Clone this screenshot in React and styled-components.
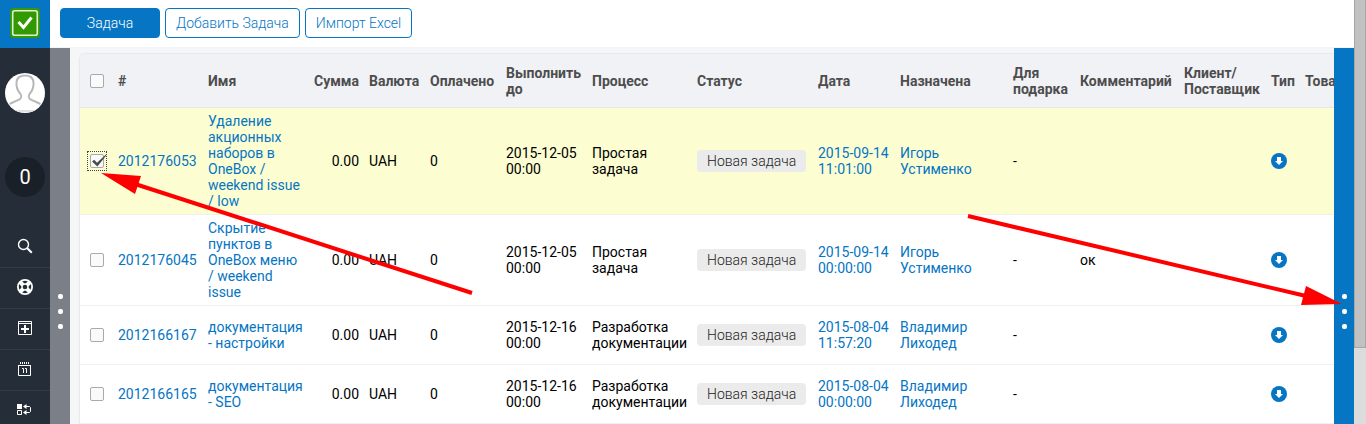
import React from 'react';
import styled, { createGlobalStyle } from 'styled-components';

const Global = createGlobalStyle`
  * { box-sizing: border-box; }
  body {
    margin: 0;
    font: 14px/16px Roboto, "Liberation Sans", sans-serif;
    color: #000;
    background: #f5f6f8;
  }
  a { color: #0575c4; text-decoration: none; }
  svg { display: block; }
`;

const Shell = styled.div`
  display: flex;
  height: 100vh;
  overflow: hidden;
`;

const Sidebar = styled.nav`
  flex: 0 0 50px;
  display: flex;
  flex-direction: column;
  background: #252e38;
`;

const Logo = styled.a`
  flex: none;
  display: flex;
  align-items: center;
  justify-content: center;
  height: 48px;
  padding-bottom: 2px;
  background: #0575c4;
`;

const Avatar = styled.a`
  flex: none;
  width: 40px;
  height: 40px;
  margin: 25px 5px 44px;
  border-radius: 50%;
  overflow: hidden;
  background: #fff;
`;

const Counter = styled.a`
  flex: none;
  width: 40px;
  height: 40px;
  margin: 0 5px 30px;
  border-radius: 50%;
  background: #1a2027;
  color: #fff;
  font-size: 20px;
  line-height: 40px;
  text-align: center;
`;

const SideButton = styled.button`
  flex: none;
  display: flex;
  align-items: center;
  justify-content: center;
  width: 100%;
  height: 41px;
  padding: 0 0 2px;
  border: 0;
  border-bottom: 1px solid #323b46;
  background: none;
  color: #fff;
`;

const Main = styled.div`
  flex: 1;
  min-width: 0;
  display: flex;
  flex-direction: column;
`;

const Toolbar = styled.header`
  flex: none;
  display: flex;
  gap: 5px;
  height: 48px;
  padding: 8px 10px;
  background: #fff;
  border-bottom: 1px solid #f3f4f6;
`;

const ToolButton = styled.button`
  height: 30px;
  min-width: 100px;
  padding: 0 10px;
  border: 1px solid #0575c4;
  border-radius: 4px;
  background: ${(p) => (p.$primary ? '#0575c4' : '#fff')};
  color: ${(p) => (p.$primary ? '#fff' : '#0575c4')};
  font: 300 14px/28px Roboto, "Liberation Sans", sans-serif;
  white-space: nowrap;
`;

const Workspace = styled.div`
  flex: 1;
  min-height: 0;
  display: flex;
`;

const Handle = styled.button`
  flex: 0 0 20px;
  display: flex;
  flex-direction: column;
  align-items: center;
  gap: 10px;
  padding: 246px 0 0;
  border: 0;
  background: ${(p) => (p.$active ? '#0575c4' : '#7b7f87')};
`;

const Dot = styled.span`
  width: 5px;
  height: 5px;
  border-radius: 2px;
  background: #fff;
`;

const Content = styled.main`
  flex: 1;
  min-width: 0;
  padding: 6px 0 0 10px;
  overflow: hidden;
`;

const Table = styled.table`
  table-layout: fixed;
  width: 100%;
  min-width: 1300px;
  border-collapse: separate;
  border-spacing: 0;
  background: #fff;
  border-radius: 5px 0 0 0;
  box-shadow: 0 0 2px rgba(0, 0, 0, 0.2);
`;

const Col = styled.col`
  width: ${(p) => (p.$w ? `${p.$w}px` : 'auto')};
`;

const Th = styled.th`
  height: 54px;
  padding: 0 5px;
  border-bottom: 1px solid #e4e6ea;
  background: #f1f2f6;
  color: #4d4d4d;
  font-weight: 700;
  text-align: ${(p) => p.$align || 'left'};
  &:first-child { padding-left: 10px; border-top-left-radius: 5px; }
`;

const Row = styled.tr`
  height: 59px;
  background: ${(p) => (p.$selected ? '#fcfed1' : '#fff')};
`;

const Td = styled.td`
  padding: 5px;
  border-bottom: 1px solid #f0f0f0;
  text-align: ${(p) => p.$align || 'left'};
  &:first-child { padding-left: 10px; }
`;

const CheckLabel = styled.label`
  position: relative;
  display: block;
  width: 14px;
  height: 14px;
  outline: ${(p) => (p.$focused ? '1px dotted #444' : 'none')};
  outline-offset: 2px;
  svg { position: absolute; left: 1px; top: 0; pointer-events: none; }
`;

const Checkbox = styled.input`
  appearance: none;
  display: block;
  width: 14px;
  height: 14px;
  margin: 0;
  border: 1px solid #aaa;
  border-radius: 2px;
  background: #fafafa;
`;

const Status = styled.span`
  display: inline-block;
  padding: 3px 10px;
  border-radius: 4px;
  background: #ebebeb;
  color: #222;
  font-weight: 300;
  white-space: nowrap;
`;

const TypeLink = styled.a`
  display: block;
  width: 16px;
`;

const ScrollTrack = styled.div`
  flex: 0 0 12px;
  background: #dcdcdc;
`;

const ScrollThumb = styled.div`
  height: 82vh;
  border: 1px solid #a6a6a6;
  border-top: 0;
  background: #c1c1c1;
`;

const Arrows = styled.svg`
  position: absolute;
  left: 0;
  top: 0;
  pointer-events: none;
`;

const columns = [
  { title: '#', w: 90 },
  { title: 'Имя', w: 105 },
  { title: 'Сумма', w: 56, align: 'right' },
  { title: 'Валюта', w: 61 },
  { title: 'Оплачено', w: 76 },
  { title: 'Выполнить до', w: 86 },
  { title: 'Процесс', w: 105 },
  { title: 'Статус', w: 121 },
  { title: 'Дата', w: 82 },
  { title: 'Назначена', w: 113 },
  { title: 'Для подарка', w: 67 },
  { title: 'Комментарий', w: 104 },
  { title: 'Клиент/ Поставщик', w: 87 },
  { title: 'Тип', w: 34 },
  { title: 'Товары' },
];

const tasks = [
  { id: '2012176053', name: 'Удаление акционных наборов в OneBox / weekend issue / low', due: '2015-12-05 00:00', process: 'Простая задача', date: '2015-09-14 11:01:00', who: 'Игорь Устименко', note: '', selected: true },
  { id: '2012176045', name: 'Скрытие пунктов в OneBox меню / weekend issue', due: '2015-12-05 00:00', process: 'Простая задача', date: '2015-09-14 00:00:00', who: 'Игорь Устименко', note: 'ок' },
  { id: '2012166167', name: 'документация - настройки', due: '2015-12-16 00:00', process: 'Разработка документации', date: '2015-08-04 11:57:20', who: 'Владимир Лиходед', note: '' },
  { id: '2012166165', name: 'документация - SEO', due: '2015-12-16 00:00', process: 'Разработка документации', date: '2015-08-04 00:00:00', who: 'Владимир Лиходед', note: '' },
];

function Check({ label, checked }) {
  return (
    <CheckLabel $focused={checked}>
      <Checkbox type="checkbox" aria-label={label} defaultChecked={checked} />
      {checked && (
        <svg width="16" height="14" viewBox="0 0 16 14">
          <path d="M1 7.5 L3.2 5.8 L6 8.8 L14.6 0.8 L15.2 1.6 L6.4 12.6 Z" fill="#4b4b4b" />
        </svg>
      )}
    </CheckLabel>
  );
}

function Dots() {
  return <><Dot /><Dot /><Dot /></>;
}

const SearchIcon = () => (
  <svg width="16" height="16" viewBox="0 0 16 16" fill="none" stroke="#fff">
    <circle cx="6.5" cy="6.500" r="5" strokeWidth="1.4" />
    <path d="M10 10 L14.800 14.800" strokeWidth="2" />
  </svg>
);

const HelpIcon = () => (
  <svg width="16" height="16" viewBox="0 0 16 16" fill="none" stroke="#fff">
    <circle cx="8" cy="8" r="7.1" strokeWidth="1.8" />
    <circle cx="8" cy="8" r="3" strokeWidth="1.4" />
    <path d="M3 3 L6 6 M13 3 L10 6 M3 13 L6 10 M13 13 L10 10" strokeWidth="4" />
  </svg>
);

const AddIcon = () => (
  <svg width="14" height="14" viewBox="0 0 14 14" fill="none" stroke="#fff">
    <path d="M0.5 0.5 H13.5 V13.5 H0.5 Z M0.5 2.5 H13.5" />
    <path d="M7 4 V12 M3 8 H11" strokeWidth="2" />
  </svg>
);

const CalendarIcon = () => (
  <svg width="14" height="14" viewBox="0 0 14 14" fill="none" stroke="#fff">
    <path d="M0.5 3 V13.5 H12.5 V3 M0 3.500 H13" />
    <path d="M2.5 0 V2 M4.5 0 V2 M6.5 0 V2 M8.5 0 V2 M10.5 0 V2" />
    <path d="M4 6.5 H5.5 V11 M7 6.5 H8.5 V11" />
  </svg>
);

const FlowIcon = () => (
  <svg width="16" height="12" viewBox="0 0 16 12" fill="none" stroke="#fff">
    <rect x="0" y="0" width="5" height="5" fill="#fff" stroke="none" />
    <path d="M0.5 6.5 H4.5 V10.5 H0.5 Z" />
    <path d="M8 2.5 H12.5 L13.5 3.5 V7.500 L12.500 8.5 H8" />
    <path d="M9.500 0 L6 2.5 L9.500 5 Z M9.500 6 L6 8.500 L9.500 11 Z" fill="#fff" stroke="none" />
  </svg>
);

const DownIcon = () => (
  <svg width="16" height="16" viewBox="0 0 16 16">
    <circle cx="8" cy="8" r="8" fill="#0575c4" />
    <path d="M6 4 H10 V8 H12 L8 12 L4 8 H6 Z" fill="#fff" />
  </svg>
);

const menu = [
  ['Поиск', SearchIcon],
  ['Помощь', HelpIcon],
  ['Добавить', AddIcon],
  ['Календарь', CalendarIcon],
  ['Процессы', FlowIcon],
];

export default function App() {
  return (
    <Shell>
      <Global />
      <Sidebar>
        <Logo href="#" aria-label="OneBox">
          <svg width="30" height="30" viewBox="0 0 30 30">
            <rect x="0" y="0" width="30" height="30" rx="4" fill="#339900" />
            <rect x="2.7" y="2.7" width="24.6" height="24.6" rx="2" fill="none" stroke="#e4f2dc" strokeWidth="1.6" />
            <path d="M8.500 14 L13.500 19.500 L21.5 9.5" fill="none" stroke="#fff" strokeWidth="3" />
          </svg>
        </Logo>
        <Avatar href="#" aria-label="Профиль">
          <svg width="40" height="40" viewBox="0 0 40 40" fill="none" stroke="#b8b8b8" strokeWidth="2">
            <path d="M4.500 31 L14.500 26.500 C16.500 25 16.500 22.500 15.500 21 C12 17 11 14 11.500 9 C12 5 15 2.500 20 2.500 C25 2.500 28 5 28.500 9 C29 14 28 17 24.500 21 C23.500 22.500 23.500 25 25.500 26.500 L35.500 31" />
            <path d="M10 38 H30" stroke="#e2e2e2" />
          </svg>
        </Avatar>
        <Counter href="#">0</Counter>
        {menu.map(([label, Icon]) => (
          <SideButton key={label} aria-label={label}><Icon /></SideButton>
        ))}
      </Sidebar>
      <Main>
        <Toolbar>
          <ToolButton $primary>Задача</ToolButton>
          <ToolButton>Добавить Задача</ToolButton>
          <ToolButton>Импорт Excel</ToolButton>
        </Toolbar>
        <Workspace>
          <Handle aria-label="Левая панель"><Dots /></Handle>
          <Content>
            <Table>
              <colgroup>
                <Col $w={33} />
                {columns.map((c) => <Col key={c.title} $w={c.w} />)}
              </colgroup>
              <thead>
                <tr>
                  <Th><Check label="Выбрать все" /></Th>
                  {columns.map((c) => <Th key={c.title} $align={c.align}>{c.title}</Th>)}
                </tr>
              </thead>
              <tbody>
                {tasks.map((t) => (
                  <Row key={t.id} $selected={t.selected}>
                    <Td><Check label={t.id} checked={t.selected} /></Td>
                    <Td><a href="#">{t.id}</a></Td>
                    <Td><a href="#">{t.name}</a></Td>
                    <Td $align="right">0.00</Td>
                    <Td>UAH</Td>
                    <Td>0</Td>
                    <Td>{t.due}</Td>
                    <Td>{t.process}</Td>
                    <Td><Status>Новая задача</Status></Td>
                    <Td><a href="#">{t.date}</a></Td>
                    <Td><a href="#">{t.who}</a></Td>
                    <Td>-</Td>
                    <Td>{t.note}</Td>
                    <Td />
                    <Td><TypeLink href="#" aria-label="Тип"><DownIcon /></TypeLink></Td>
                    <Td />
                  </Row>
                ))}
              </tbody>
            </Table>
          </Content>
          <Handle $active aria-label="Правая панель"><Dots /></Handle>
        </Workspace>
      </Main>
      <ScrollTrack><ScrollThumb /></ScrollTrack>
      <Arrows width="1366" height="424" viewBox="0 0 1366 424" fill="#f00" stroke="#f00">
        <path d="M472 293 L132 183 M968 216 L1306 296" strokeWidth="4" />
        <path d="M101 173 L141 176 L135 194 Z M1342 304 L1306 286 L1301 305 Z" stroke="none" />
      </Arrows>
    </Shell>
  );
}
